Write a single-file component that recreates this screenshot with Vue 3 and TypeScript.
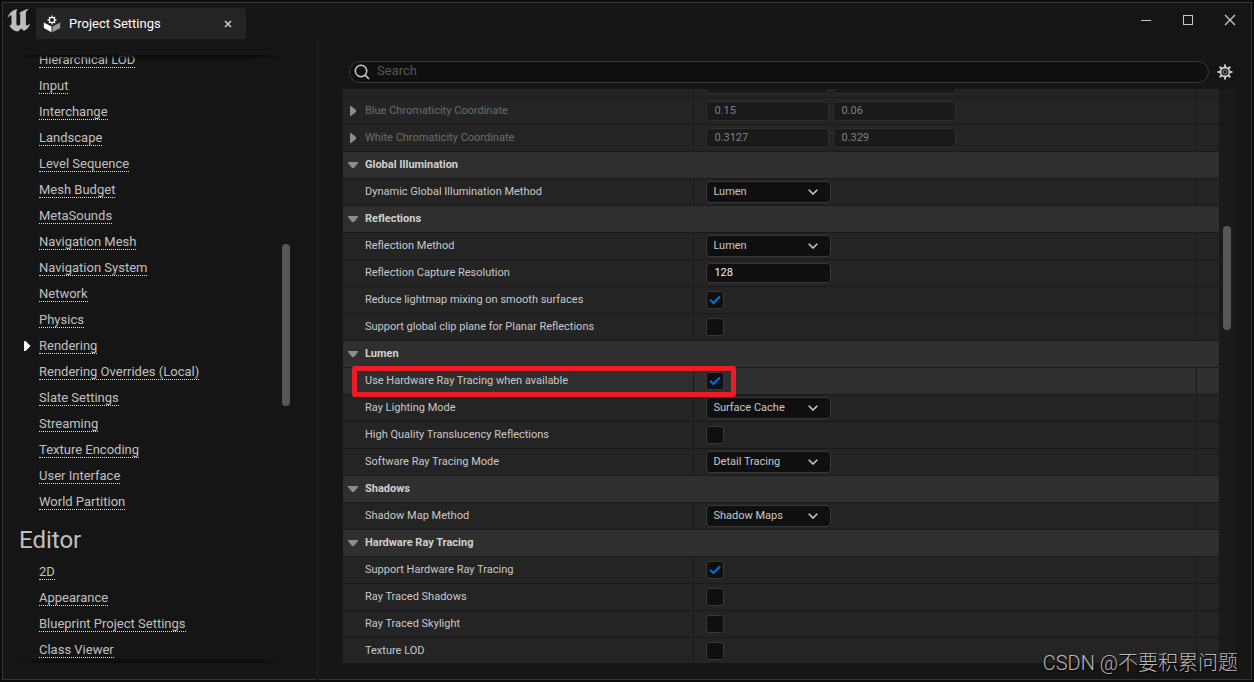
<script setup lang="ts">
import { ref } from 'vue'

type Control =
  | { kind: 'none' }
  | { kind: 'select'; value: string }
  | { kind: 'text'; value: string }
  | { kind: 'check'; value: boolean }
  | { kind: 'pair'; x: string; y: string }

interface Row {
  id: string
  label: string
  control: Control
  header?: boolean
  disabled?: boolean
  hovered?: boolean
}

const select = (id: string, label: string, value: string): Row => ({ id, label, control: { kind: 'select', value } })
const check = (id: string, label: string, value: boolean): Row => ({ id, label, control: { kind: 'check', value } })
const header = (id: string, label: string): Row => ({ id, label, header: true, control: { kind: 'none' } })
const pair = (id: string, label: string, x: string, y: string): Row => ({
  id, label, disabled: true, control: { kind: 'pair', x, y },
})

const rows = ref<Row[]>([
  pair('previous', '', '', ''),
  pair('blue', 'Blue Chromaticity Coordinate', '0.15', '0.06'),
  pair('white', 'White Chromaticity Coordinate', '0.3127', '0.329'),
  header('gi', 'Global Illumination'),
  select('gi-method', 'Dynamic Global Illumination Method', 'Lumen'),
  header('reflections', 'Reflections'),
  select('refl-method', 'Reflection Method', 'Lumen'),
  { id: 'capture', label: 'Reflection Capture Resolution', control: { kind: 'text', value: '128' } },
  check('lightmap', 'Reduce lightmap mixing on smooth surfaces', true),
  check('clip', 'Support global clip plane for Planar Reflections', false),
  header('lumen', 'Lumen'),
  { ...check('hwrt', 'Use Hardware Ray Tracing when available', true), hovered: true },
  select('lighting', 'Ray Lighting Mode', 'Surface Cache'),
  check('translucency', 'High Quality Translucency Reflections', false),
  select('software', 'Software Ray Tracing Mode', 'Detail Tracing'),
  header('shadows', 'Shadows'),
  select('shadow-method', 'Shadow Map Method', 'Shadow Maps'),
  header('hardware', 'Hardware Ray Tracing'),
  check('support', 'Support Hardware Ray Tracing', true),
  check('rt-shadows', 'Ray Traced Shadows', false),
  check('rt-skylight', 'Ray Traced Skylight', false),
  check('lod', 'Texture LOD', false),
])

const engineLinks = [
  'Hierarchical LOD', 'Input', 'Interchange', 'Landscape', 'Level Sequence', 'Mesh Budget',
  'MetaSounds', 'Navigation Mesh', 'Navigation System', 'Network', 'Physics', 'Rendering',
  'Rendering Overrides (Local)', 'Slate Settings', 'Streaming', 'Texture Encoding',
  'User Interface', 'World Partition',
]
const editorLinks = ['2D', 'Appearance', 'Blueprint Project Settings', 'Class Viewer']
const current = 'Rendering'
const query = ref('')
const teeth = [0, 45, 90, 135, 180, 225, 270, 315]
</script>

<template>
  <div class="window">
    <header class="titlebar">
      <svg class="logo" viewBox="0 0 24 24" aria-hidden="true">
        <path d="M0.500 10.500C1.500 5.500 5 2.300 10.500 1C9.600 2.200 9.400 3.200 9.400 4.500V15.700C9.400 17 10 17.600 11 17.600C12 17.600 12.700 17.200 13.200 16.500V6.600C13.200 5.500 12.700 5.100 11.800 5.200C14.500 3.500 17.500 1.800 22 0.800C20 2.500 18.900 3.700 18.900 5V15.800C18.900 17 19.200 17.500 20 17.500C21.200 17.400 22.300 16.500 23.500 15C22.300 19 20 21.800 16.700 22.800L14.300 20.500L11 23.500C6.800 23 3.700 20.600 2.300 16.900C3.700 17.500 4.500 17 4.500 15.700V8.600C4.500 7.400 4 7 3.200 7.400C2.200 7.900 1.300 9 0.500 10.500Z" fill="#bdbdbd" />
      </svg>
      <div class="tab">
        <svg class="tab-icon" viewBox="0 0 18 18" aria-hidden="true">
          <path d="M0.800 7.500L8.500 11.500V17.300L0.800 13Z" fill="#ffffff" />
          <path d="M9.500 11.500L17.200 7.500V13L9.500 17.300Z" fill="#9a9a9a" />
          <g stroke="#e0e0e0" stroke-width="1.300">
            <line v-for="t in teeth" :key="t" x1="9" y1="0.600" x2="9" y2="2" :transform="`rotate(${t} 9 5)`" />
          </g>
          <circle cx="9" cy="5" r="2.700" fill="none" stroke="#ffffff" stroke-width="1.200" />
        </svg>
        <span class="tab-title">Project Settings</span>
        <button class="tab-close" type="button" aria-label="Close tab">
          <svg viewBox="0 0 8 8"><path d="M1 1L7 7M7 1L1 7" stroke="#c8c8c8" stroke-width="1.600" /></svg>
        </button>
      </div>
      <div class="window-buttons">
        <button type="button" aria-label="Minimize">
          <svg viewBox="0 0 12 12"><path d="M1 6.500H11" stroke="#c8c8c8" /></svg>
        </button>
        <button type="button" aria-label="Maximize">
          <svg viewBox="0 0 12 12"><rect x="1.500" y="1.500" width="9" height="9" fill="none" stroke="#c8c8c8" /></svg>
        </button>
        <button type="button" aria-label="Close">
          <svg viewBox="0 0 12 12"><path d="M1 1L11 11M11 1L1 11" stroke="#c8c8c8" stroke-width="1.400" /></svg>
        </button>
      </div>
    </header>

    <div class="body">
      <aside class="sidebar">
        <nav class="nav">
          <ul class="links scrolled">
            <li v-for="name in engineLinks" :key="name">
              <svg v-if="name === current" class="marker" viewBox="0 0 7 10" aria-hidden="true">
                <path d="M0 0H1.500L6.500 5L1.500 10H0Z" fill="#ffffff" />
              </svg>
              <a href="#">{{ name }}</a>
            </li>
          </ul>
          <h2>Editor</h2>
          <ul class="links">
            <li v-for="name in editorLinks" :key="name"><a href="#">{{ name }}</a></li>
          </ul>
        </nav>
        <div class="nav-track"><div class="thumb nav-thumb"></div></div>
      </aside>
      <div class="splitter"></div>

      <main class="main">
        <div class="toolbar">
          <label class="search">
            <svg viewBox="0 0 16 16" aria-hidden="true">
              <circle cx="7" cy="7" r="5.700" fill="none" stroke="#c8c8c8" stroke-width="1.500" />
              <path d="M11 11L15 15" stroke="#c8c8c8" stroke-width="1.700" />
            </svg>
            <input v-model="query" type="text" placeholder="Search" aria-label="Search" />
          </label>
          <button class="gear" type="button" aria-label="View options">
            <svg viewBox="0 0 16 16">
              <g stroke="#c8c8c8" stroke-width="2">
                <line v-for="t in teeth" :key="t" x1="8" y1="0.500" x2="8" y2="3" :transform="`rotate(${t} 8 8)`" />
              </g>
              <circle cx="8" cy="8" r="4.500" fill="none" stroke="#c8c8c8" stroke-width="1.800" />
              <circle cx="8" cy="8" r="2" fill="none" stroke="#8c8c8c" />
            </svg>
          </button>
        </div>

        <div class="details">
          <div class="list">
            <div
              v-for="row in rows"
              :key="row.id"
              class="row"
              :class="{ header: row.header, disabled: row.disabled, hovered: row.hovered }"
            >
              <div class="name">
                <span class="arrow">
                  <svg v-if="row.header" viewBox="0 0 10 10" aria-hidden="true">
                    <path d="M0 2H10V3L6 8H4L0 3Z" fill="#8c8c8c" />
                  </svg>
                  <svg v-else-if="row.disabled && row.label" viewBox="0 0 10 10" aria-hidden="true">
                    <path d="M2 0H3L8 4V6L3 10H2Z" fill="#8c8c8c" />
                  </svg>
                </span>
                <h3 v-if="row.header">{{ row.label }}</h3>
                <label v-else :for="row.id">{{ row.label }}</label>
              </div>
              <template v-if="!row.header">
                <div class="value">
                  <template v-if="row.control.kind === 'pair'">
                    <input :id="row.id" type="text" class="field half" :value="row.control.x" disabled />
                    <input type="text" class="field half" :value="row.control.y" :aria-label="`${row.label} Y`" disabled />
                  </template>
                  <span v-else-if="row.control.kind === 'select'" class="combo">
                    <select :id="row.id" v-model="row.control.value">
                      <option>{{ row.control.value }}</option>
                    </select>
                    <svg viewBox="0 0 10 6" aria-hidden="true">
                      <path d="M0.700 0.700L5 5L9.300 0.700" fill="none" stroke="#c8c8c8" stroke-width="1.600" />
                    </svg>
                  </span>
                  <input v-else-if="row.control.kind === 'text'" :id="row.id" v-model="row.control.value" type="text" class="field" />
                  <span v-else-if="row.control.kind === 'check'" class="tick">
                    <input :id="row.id" v-model="row.control.value" type="checkbox" />
                    <svg v-if="row.control.value" viewBox="0 0 12 10" aria-hidden="true">
                      <path d="M1 4.800L4.500 8L11 1.500" fill="none" stroke="#0070e0" stroke-width="2.200" />
                    </svg>
                  </span>
                </div>
                <div class="reset"></div>
              </template>
              <div v-if="row.hovered" class="callout"></div>
            </div>
          </div>
          <div class="list-track"><div class="thumb list-thumb"></div></div>
        </div>
      </main>
    </div>
    <div class="watermark">CSDN @不要积累问题</div>
  </div>
</template>

<style>
html,
body,
#app {
  height: 100%;
}

body {
  margin: 0;
  background: #0c0c0c;
}
</style>

<style scoped>
* {
  box-sizing: border-box;
}

.window {
  position: relative;
  display: flex;
  flex-direction: column;
  height: 100%;
  border: 2px solid #0c0c0c;
  background: #151515;
  box-shadow: inset 0 0 0 1px #353535;
  color: #c0c0c0;
  font-family: Roboto, "Noto Sans CJK SC", sans-serif;
  font-size: 11px;
  overflow: hidden;
}

button {
  display: flex;
  align-items: center;
  justify-content: center;
  padding: 0;
  border: 0;
  background: none;
}

.titlebar {
  display: flex;
  flex: none;
  height: 37px;
  padding: 6px 8px 0 5px;
}

.logo {
  width: 24px;
  height: 24px;
  margin-right: 5px;
}

.tab {
  display: flex;
  align-items: center;
  width: 210px;
  padding: 0 11px 0 7px;
  border-radius: 4px 4px 0 0;
  background: #242424;
}

.tab-icon {
  width: 18px;
  height: 18px;
}

.tab-title {
  flex: 1;
  margin-left: 8px;
  color: #ffffff;
  font-size: 13px;
}

.tab-close {
  width: 14px;
  height: 14px;
}

.tab-close svg {
  width: 8px;
  height: 8px;
}

.window-buttons {
  display: flex;
  gap: 14px;
  height: 24px;
  margin-left: auto;
}

.window-buttons button {
  width: 28px;
  height: 24px;
}

.window-buttons svg {
  width: 12px;
  height: 12px;
}

.body {
  display: flex;
  flex: 1;
  min-height: 0;
}

.sidebar {
  display: flex;
  flex: none;
  width: 314px;
  padding: 16px 0 17px 17px;
}

.nav {
  position: relative;
  width: 260px;
  overflow: hidden;
}

.nav::before,
.nav::after {
  content: "";
  position: absolute;
  right: 0;
  left: 0;
  z-index: 1;
  height: 5px;
  mask-image: linear-gradient(to right, transparent, #000000 24px, #000000 calc(100% - 24px), transparent);
}

.nav::before {
  top: 0;
  background: linear-gradient(to bottom, #080808, transparent);
}

.nav::after {
  bottom: 0;
  background: linear-gradient(to top, #080808, transparent);
}

.links {
  margin: 0;
  padding: 0;
  list-style: none;
}

.scrolled {
  margin-top: -8px;
}

.links li {
  position: relative;
  display: flex;
  align-items: center;
  height: 26px;
  padding-left: 20px;
}

.links a {
  border-bottom: 1px dotted #e0e0e0;
  color: #c0c0c0;
  font-size: 13px;
  line-height: 14px;
  text-decoration: none;
}

.marker {
  position: absolute;
  left: 5px;
  width: 7px;
  height: 10px;
}

h2 {
  height: 44px;
  margin: 0;
  font-size: 24px;
  font-weight: 400;
  line-height: 50px;
}

.nav-track {
  width: 8px;
  margin-left: 3px;
}

.thumb {
  width: 8px;
  border-radius: 4px;
  background: #575757;
}

.nav-thumb {
  height: 162px;
  margin-top: 189px;
}

.splitter {
  flex: none;
  width: 3px;
  background: #1a1a1a;
}

.main {
  display: flex;
  flex: 1;
  flex-direction: column;
  min-width: 0;
  padding: 22px 17px 17px 24px;
}

.toolbar {
  display: flex;
  flex: none;
  align-items: center;
  gap: 8px;
  height: 22px;
  margin-bottom: 6px;
  padding: 0 2px 0 6px;
}

.search {
  display: flex;
  flex: 1;
  align-items: center;
  gap: 7px;
  height: 22px;
  padding: 0 4px;
  border: 1px solid #383838;
  border-radius: 11px;
  background: #0f0f0f;
}

.search svg {
  width: 16px;
  height: 16px;
}

.search input {
  flex: 1;
  height: 20px;
  padding: 0 0 3px;
  border: 0;
  outline: 0;
  background: none;
  color: #c0c0c0;
  font: 13px Roboto, sans-serif;
}

.search input::placeholder {
  color: #575757;
}

.gear,
.gear svg {
  width: 16px;
  height: 16px;
}

.details {
  display: flex;
  flex: 1;
  min-height: 0;
}

.list {
  flex: 1;
  min-width: 0;
  overflow: hidden;
}

.row {
  position: relative;
  display: flex;
  height: 27px;
  border-bottom: 1px solid #1a1a1a;
  background: #242424;
}

.row:first-child {
  margin-top: -18px;
}

.row.header,
.row.hovered {
  background: #2f2f2f;
}

.name {
  display: flex;
  align-items: center;
  width: 40%;
  padding-left: 5px;
}

.arrow {
  flex: none;
  width: 10px;
  height: 10px;
  margin-right: 7px;
}

.arrow svg {
  display: block;
  width: 10px;
  height: 10px;
}

.name label,
.name h3 {
  margin: 0;
  padding-bottom: 1px;
  font-size: 11px;
  font-weight: 400;
  white-space: nowrap;
}

.name h3 {
  color: #d0d0d0;
  font-weight: 700;
}

.name label {
  color: #c8c8c8;
}

.disabled .name label {
  color: #6c6c6c;
}

.value {
  display: flex;
  flex: 1;
  align-items: center;
  gap: 4px;
  padding-left: 12px;
  border-left: 1px solid #1a1a1a;
}

.reset {
  width: 23px;
  border-left: 1px solid #1a1a1a;
}

.field,
select {
  width: 125px;
  height: 20px;
  padding: 0 7px 1px;
  border: 1px solid #383838;
  border-radius: 4px;
  outline: 0;
  background: #0f0f0f;
  color: #f0f0f0;
  font: 11px Roboto, sans-serif;
}

.half {
  width: 123px;
  border-color: #2f2f2f;
  background: #1a1a1a;
  color: #808080;
}

.combo {
  position: relative;
  display: flex;
}

select {
  height: 22px;
  padding: 0 24px 1px 6px;
  appearance: none;
  color: #c8c8c8;
}

.combo svg {
  position: absolute;
  top: 8px;
  right: 13px;
  width: 10px;
  height: 6px;
  pointer-events: none;
}

.tick {
  position: relative;
  display: flex;
  width: 18px;
  height: 18px;
}

.tick input {
  width: 18px;
  height: 18px;
  margin: 0;
  border: 1px solid #383838;
  border-radius: 3px;
  appearance: none;
  background: #0f0f0f;
}

.tick svg {
  position: absolute;
  top: 4px;
  left: 3px;
  width: 12px;
  height: 10px;
  pointer-events: none;
}

.callout {
  position: absolute;
  top: -2px;
  left: 9px;
  z-index: 1;
  width: calc(40% + 34px);
  height: 31px;
  border: 5px solid #ed1c24;
  border-radius: 3px;
  pointer-events: none;
}

.list-track {
  width: 16px;
  padding: 137px 4px 0;
  background: #1a1a1a;
}

.list-thumb {
  height: 104px;
}

.watermark {
  position: absolute;
  right: 14px;
  bottom: 3px;
  color: #b8b8b8;
  font-family: Roboto, "Noto Sans CJK SC", sans-serif;
  font-size: 20px;
  font-weight: 300;
  line-height: 28px;
  text-shadow: 1px 1px 1px #000000;
}
</style>
